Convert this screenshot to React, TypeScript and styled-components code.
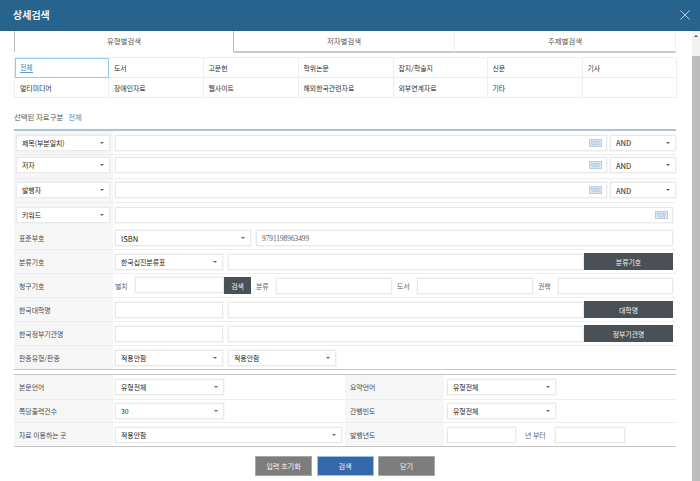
import React from "react";
import styled, { createGlobalStyle } from "styled-components";

const Global = createGlobalStyle`
  html, body { margin: 0; padding: 0; width: 700px; height: 481px; overflow: hidden; background: #fff; }
  body { font-family: "Noto Sans CJK KR", "Noto Sans", sans-serif; font-size: 6.9px; color: #3c3c3c; }
  * { box-sizing: border-box; }
`;
const Page = styled.div`
  width: 700px; height: 481px; display: flex; flex-direction: column;
`;
const Header = styled.header`
  height: 31px; flex: none; background: #27638c; border-bottom: 1px solid #2b5f83;
  display: flex; align-items: center; justify-content: space-between; padding: 0 10px 1px 13px;
`;
const Title = styled.h1`
  margin: 0; font-size: 10px; font-weight: 700; color: #f2f6f9;
`;
const Body = styled.div`
  flex: 1; min-height: 0; display: flex; justify-content: space-between;
`;
const Content = styled.main`
  width: 662px; margin-left: 14px; display: flex; flex-direction: column;
`;
const Scroll = styled.div`
  width: 8px; display: flex; flex-direction: column; background: #f1f1f1;
`;
const ScrollArrow = styled.div`
  height: 25px; flex: none; display: flex; justify-content: center; padding-top: 4px;
  &::before { content: ""; width: 0; height: 0; border: 2px solid transparent; border-top: 0; border-bottom: 2px solid #505050; }
`;
const ScrollThumb = styled.div`
  flex: 1; background: #bcbcbc;
`;
const Tabs = styled.div`
  display: grid; grid-template-columns: 220px 221px 221px; height: 22px;
`;
const Tab = styled.div<{ $active?: boolean }>`
  display: flex; align-items: center; justify-content: center; padding-bottom: 1px; color: #555; font-size: 7.4px;
  border-bottom: 2px solid ${(p) => (p.$active ? "transparent" : "#c8c8c8")};
  border-left: ${(p) => (p.$active ? "1px solid #bdbdbd" : "0")};
  border-right: ${(p) => (p.$active ? "1px solid #bdbdbd" : "1px solid #eeeeee")};
`;
const TypeGrid = styled.div`
  margin-top: 4px; display: grid; grid-template-columns: 94px 94.5px 95px 95px 94px 95px 94.5px;
  grid-auto-rows: 20px; border-top: 1px solid #eeeeee; border-left: 1px solid #eeeeee;
`;
const TypeCell = styled.div<{ $active?: boolean }>`
  display: flex; align-items: center; padding: 0 0 0 5px; white-space: nowrap; color: #2e2e2e;
  border-right: 1px solid #eeeeee; border-bottom: 1px solid #eeeeee;
  ${(p) => p.$active && "outline: 1px solid #8fcbf0; outline-offset: -1px; color: #3f7fb5; border-color: transparent;"}
`;
const ActiveText = styled.span`
  border-bottom: 1px solid #5a9bd0; line-height: 8px; padding-bottom: 1px;
`;
const Selected = styled.div`
  margin-top: 12px; height: 12px; display: flex; align-items: center; gap: 5px; color: #555; font-size: 7.4px;
`;
const SelectedValue = styled.span`
  color: #4a86c0;
`;
const TableOne = styled.section`
  margin-top: 7px; border-top: 2px solid #a7c5de; display: flex; flex-direction: column;
`;
const TableTwo = styled.section`
  margin-top: 4px; border-top: 1px solid #c4c4c4; border-bottom: 1px solid #c4c4c4; display: flex; flex-direction: column;
`;
const Row = styled.div<{ $h?: number; $last?: boolean; $noLine?: boolean }>`
  height: ${(p) => p.$h ?? 24}px; display: flex;
  border-bottom: ${(p) => (p.$noLine ? "0" : p.$last ? "1px solid #c4c4c4" : "1px solid #eeeeee")};
`;
const Label = styled.div`
  width: 99px; flex: none; background: #f6f6f6; display: flex; align-items: center;
  padding: 0 5px; color: #4a4a4a; white-space: nowrap;
`;
const Value = styled.div`
  flex: 1; min-width: 0; display: flex; align-items: center; gap: 5px; padding: 0 3px 0 2px;
`;
const SearchValue = styled(Value)`
  gap: 3px; padding-right: 0;
`;
const SideValue = styled(Value)`
  padding-left: 3px;
`;
const HalfValue = styled(Value)`
  flex: none; width: 232px;
`;
const Select = styled.div<{ $w: number; $latin?: boolean; $lift?: number }>`
  width: ${(p) => p.$w}px; height: 16px; flex: none; display: flex; align-items: center; justify-content: space-between;
  margin-bottom: ${(p) => p.$lift ?? 0}px;
  padding: 0 5px; background: #fff; border: 1px solid #e9e9e9; box-shadow: 0 0 0 0.5px #f0f0f0; color: #222; white-space: nowrap;
  ${(p) => p.$latin && "font-size: 7.6px;"}
  &::after { content: ""; width: 0; height: 0; border: 2px solid transparent; border-bottom: 0; border-top: 2px solid #666; }
`;
const LabelSelect = styled(Select)`
  margin-left: -3px; flex: none;
`;
const InputBox = styled.div<{ $w?: number; $lift?: number }>`
  ${(p) => (p.$w ? `width: ${p.$w}px; flex: none;` : "flex: 1; min-width: 0;")}
  height: 16px; display: flex; align-items: center; justify-content: flex-end; padding: 0 4px 0 5px;
  margin-bottom: ${(p) => p.$lift ?? 0}px;
  background: #fff; border: 1px solid #e9e9e9; box-shadow: 0 0 0 0.5px #f0f0f0; color: #555; white-space: nowrap;
`;
const InputText = styled.span`
  flex: 1; font-family: "Liberation Serif", serif; font-size: 7.3px;
`;
const DarkButton = styled.div<{ $w?: number }>`
  width: ${(p) => p.$w ?? 89}px; height: 17px; flex: none; background: #4a5056; color: #f1f1f1;
  display: flex; align-items: center; justify-content: center; white-space: nowrap;
`;
const Joined = styled.div`
  display: flex; flex: none;
`;
const Flush = styled.div`
  flex: 1; min-width: 0; display: flex; align-items: center;
`;
const SmallLabel = styled.span`
  flex: none; width: 15px; color: #666; white-space: nowrap;
`;
const YearLabel = styled.span`
  flex: none; margin: 0 4px; color: #666; white-space: nowrap;
`;
const Footer = styled.footer`
  margin-top: 9px; display: flex; justify-content: center; gap: 4.5px;
`;
const FootButton = styled.div<{ $primary?: boolean }>`
  width: 57px; height: 20px; display: flex; align-items: center; justify-content: center; color: #f4f4f4; font-size: 7.2px;
  background: ${(p) => (p.$primary ? "#3467ab" : "#7d7d7d")}; border: 1px solid ${(p) => (p.$primary ? "#9cc0e4" : "#a8a8a8")};
`;

const Keyboard = () => (
  <svg width="13" height="8" viewBox="0 0 13 8" aria-hidden="true">
    <rect x="0.5" y="0.5" width="12" height="7" fill="#dbe8f4" stroke="#b4cfe6" />
    <path d="M2 2.5h9M2 4h9M3 5.7h7" stroke="#9db6cd" strokeWidth="0.8" strokeDasharray="1 0.5" />
  </svg>
);
const CloseIcon = () => (
  <svg width="10" height="10" viewBox="0 0 10 10" aria-hidden="true">
    <path d="M0.5 0.5l9 9M9.5 0.5l-9 9" stroke="#dfe9f0" strokeWidth="0.8" />
  </svg>
);

const types = ["전체","도서","고문헌","학위논문","잡지/학술지","신문","기사","멀티미디어","장애인자료","웹사이트","해외한국관련자료","외부연계자료","기타",""];

const SearchRow = ({ field, lift }: { field: string; lift?: number }) => (
  <Row>
    <Label><LabelSelect $w={94} $lift={lift}>{field}</LabelSelect></Label>
    <SearchValue>
      <InputBox $lift={lift}><Keyboard /></InputBox>
      <Select $w={66} $latin $lift={lift}>AND</Select>
    </SearchValue>
  </Row>
);

export default function App() {
  return (
    <Page>
      <Global />
      <Header>
        <Title>상세검색</Title>
        <CloseIcon />
      </Header>
      <Body>
        <Content>
          <Tabs>
            <Tab $active>유형별검색</Tab>
            <Tab>저자별검색</Tab>
            <Tab>주제별검색</Tab>
          </Tabs>
          <TypeGrid>
            {types.map((t, i) => (
              <TypeCell key={i} $active={i === 0}>{i === 0 ? <ActiveText>{t}</ActiveText> : t}</TypeCell>
            ))}
          </TypeGrid>
          <Selected>선택된 자료구분 <SelectedValue>전체</SelectedValue></Selected>
          <TableOne>
            <SearchRow field="제목(부분일치)" />
            <SearchRow field="저자" lift={3} />
            <SearchRow field="발행자" lift={1} />
            <Row $noLine>
              <Label><LabelSelect $w={94}>키워드</LabelSelect></Label>
              <Value><InputBox><Keyboard /></InputBox></Value>
            </Row>
            <Row $h={23}>
              <Label>표준부호</Label>
              <Value>
                <Select $w={136} $latin>ISBN</Select>
                <InputBox><InputText>9791198963499</InputText></InputBox>
              </Value>
            </Row>
            <Row>
              <Label>분류기호</Label>
              <Value>
                <Select $w={108}>한국십진분류표</Select>
                <Flush>
                  <InputBox />
                  <DarkButton>분류기호</DarkButton>
                </Flush>
              </Value>
            </Row>
            <Row>
              <Label>청구기호</Label>
              <Value>
                <SmallLabel>별치</SmallLabel>
                <Joined>
                  <InputBox $w={89} />
                  <DarkButton $w={27}>검색</DarkButton>
                </Joined>
                <SmallLabel>분류</SmallLabel>
                <InputBox $w={116} />
                <SmallLabel>도서</SmallLabel>
                <InputBox $w={116} />
                <SmallLabel>권책</SmallLabel>
                <InputBox />
              </Value>
            </Row>
            <Row>
              <Label>한국대학명</Label>
              <Value>
                <InputBox $w={108} />
                <Flush>
                  <InputBox />
                  <DarkButton>대학명</DarkButton>
                </Flush>
              </Value>
            </Row>
            <Row>
              <Label>한국정부기관명</Label>
              <Value>
                <InputBox $w={108} />
                <Flush>
                  <InputBox />
                  <DarkButton>정부기관명</DarkButton>
                </Flush>
              </Value>
            </Row>
            <Row $last>
              <Label>판종유형/판종</Label>
              <Value>
                <Select $w={108}>적용안함</Select>
                <Select $w={108}>적용안함</Select>
              </Value>
            </Row>
          </TableOne>
          <TableTwo>
            <Row $h={25}>
              <Label>본문언어</Label>
              <HalfValue><Select $w={109}>유형전체</Select></HalfValue>
              <Label>요약언어</Label>
              <SideValue><Select $w={109}>유형전체</Select></SideValue>
            </Row>
            <Row $h={23}>
              <Label>쪽당출력건수</Label>
              <HalfValue><Select $w={109}>30</Select></HalfValue>
              <Label>간행빈도</Label>
              <SideValue><Select $w={109}>유형전체</Select></SideValue>
            </Row>
            <Row $h={23} $noLine>
              <Label>자료 이용하는 곳</Label>
              <HalfValue><Select $w={227}>적용안함</Select></HalfValue>
              <Label>발행년도</Label>
              <SideValue>
                <InputBox $w={69} />
                <YearLabel>년 부터</YearLabel>
                <InputBox $w={70} />
              </SideValue>
            </Row>
          </TableTwo>
          <Footer>
            <FootButton>입력 초기화</FootButton>
            <FootButton $primary>검색</FootButton>
            <FootButton>닫기</FootButton>
          </Footer>
        </Content>
        <Scroll>
          <ScrollArrow />
          <ScrollThumb />
        </Scroll>
      </Body>
    </Page>
  );
}
